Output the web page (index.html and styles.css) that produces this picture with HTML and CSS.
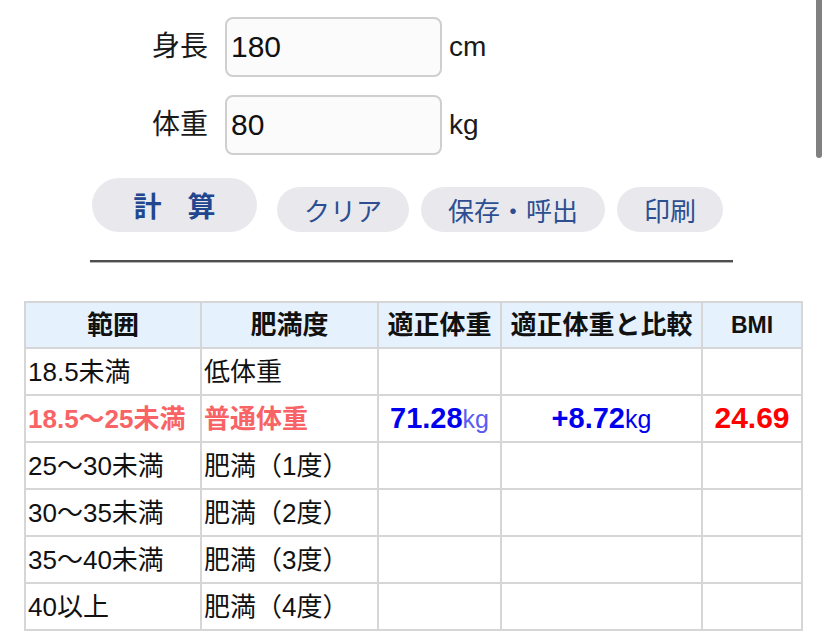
FILE: index.html
```html
<!DOCTYPE html>
<html lang="ja">
<head>
<meta charset="utf-8">
<link rel="stylesheet" href="styles.css">
</head>
<body>
<div class="page">
  <div class="form">
    <div class="row">
      <label class="label">身長</label>
      <input class="field" type="text" value="180">
      <span class="unit">cm</span>
    </div>
    <div class="row">
      <label class="label">体重</label>
      <input class="field" type="text" value="80">
      <span class="unit">kg</span>
    </div>
  </div>
  <div class="buttons">
    <button class="btn btn-main">計算</button>
    <button class="btn">クリア</button>
    <button class="btn">保存・呼出</button>
    <button class="btn">印刷</button>
  </div>
  <div class="rule"></div>
  <table class="bmi">
    <colgroup>
      <col class="c1"><col class="c2"><col class="c3"><col class="c4"><col class="c5">
    </colgroup>
    <thead>
      <tr><th>範囲</th><th>肥満度</th><th>適正体重</th><th>適正体重と比較</th><th class="latin">BMI</th></tr>
    </thead>
    <tbody>
      <tr><td>18.5未満</td><td>低体重</td><td></td><td></td><td></td></tr>
      <tr class="hit"><td>18.5〜25未満</td><td>普通体重</td>
        <td class="val"><b class="blue">71.28</b><span class="kg light">kg</span></td>
        <td class="val"><b class="blue">+8.72</b><span class="kg">kg</span></td>
        <td class="val"><b class="red">24.69</b></td></tr>
      <tr><td>25〜30未満</td><td>肥満（1度）</td><td></td><td></td><td></td></tr>
      <tr><td>30〜35未満</td><td>肥満（2度）</td><td></td><td></td><td></td></tr>
      <tr><td>35〜40未満</td><td>肥満（3度）</td><td></td><td></td><td></td></tr>
      <tr><td>40以上</td><td>肥満（4度）</td><td></td><td></td><td></td></tr>
    </tbody>
  </table>
</div>
<div class="scrollbar"></div>
</body>
</html>
```
FILE: styles.css
```css
html, body {
  margin: 0;
  padding: 0;
  background: #ffffff;
}
body {
  font-family: "Liberation Sans", "Noto Sans CJK JP", sans-serif;
  color: #111;
  width: 828px;
  height: 638px;
  overflow: hidden;
  position: relative;
}
.page {
  padding-top: 17px;
}
.form {
  display: flex;
  flex-direction: column;
  gap: 18px;
}
.row {
  display: flex;
  align-items: center;
  margin-left: 87px;
}
.label {
  width: 121px;
  text-align: right;
  font-size: 28px;
  line-height: 30px;
  margin-right: 17px;
  color: #1a1a1a;
}
.field {
  box-sizing: border-box;
  width: 217px;
  height: 60px;
  border: 2px solid #cfcfcf;
  border-radius: 8px;
  background: #fbfbfb;
  font-family: "Liberation Sans", sans-serif;
  font-size: 30px;
  color: #111;
  padding: 0 0 0 4px;
  margin: 0;
  outline: none;
}
.unit {
  font-size: 28px;
  margin-left: 7px;
  color: #1a1a1a;
}
.buttons {
  display: flex;
  align-items: flex-end;
  margin-top: 23px;
  margin-left: 92px;
}
.btn {
  font-family: "Noto Sans CJK JP", sans-serif;
  font-size: 26px;
  color: #2d4f92;
  background: #e9e9ed;
  border: none;
  border-radius: 23px;
  height: 45px;
  padding: 0 27px;
  margin: 0 0 1px 0;
  line-height: 45px;
}
.btn + .btn {
  margin-left: 12px;
}
.btn-main {
  font-size: 28px;
  font-weight: bold;
  color: #22478f;
  height: 54px;
  border-radius: 27px;
  width: 165px;
  letter-spacing: 26px;
  padding: 0 0 0 26px;
  margin-right: 8px;
  line-height: 54px;
}
.rule {
  margin: 27px 0 0 90px;
  width: 643px;
  height: 2px;
  background: #4e4e4e;
  border-bottom: 1px solid #b5b5b5;
}
.bmi {
  margin: 38px 0 0 24px;
  width: 777px;
  border-collapse: collapse;
  table-layout: fixed;
  font-family: "Liberation Sans", "Noto Sans CJK JP", sans-serif;
  font-size: 26px;
}
.c1 { width: 176px; }
.c2 { width: 177px; }
.c3 { width: 123px; }
.c4 { width: 201px; }
.c5 { width: 100px; }
.bmi th, .bmi td {
  border: 2px solid #d6d6d6;
  padding: 0 2px;
  height: 45px;
  line-height: 30px;
  white-space: nowrap;
  overflow: hidden;
}
.bmi th {
  background: #e6f1fe;
  font-weight: bold;
  text-align: center;
  color: #111;
  height: 44px;
}
.bmi th.latin {
  font-family: "Liberation Sans", sans-serif;
  font-size: 23px;
}
.bmi td {
  text-align: left;
  color: #111;
}
.hit td {
  color: #f86465;
  font-weight: bold;
}
.bmi td.val {
  text-align: center;
}
.blue {
  color: #0000ee;
  font-size: 29px;
}
.red {
  color: #ff0000;
  font-size: 30px;
}
.kg {
  font-weight: normal;
  color: #0000ee;
  font-size: 25px;
}
.kg.light {
  color: #5b5bf2;
}
.scrollbar {
  position: absolute;
  top: 0;
  left: 816px;
  width: 6px;
  height: 158px;
  background: #808080;
  border-radius: 0 0 3px 3px;
}
```
